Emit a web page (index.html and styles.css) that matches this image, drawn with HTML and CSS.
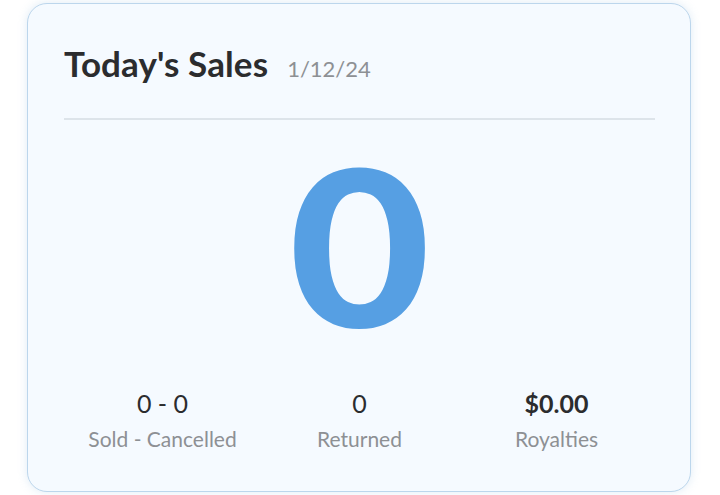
FILE: index.html
```html
<!DOCTYPE html>
<html>
<head>
<meta charset="utf-8">
<link rel="stylesheet" href="styles.css">
</head>
<body>
<div class="card">
  <div class="header">
    <h1 class="title">Today's Sales</h1>
    <span class="date">1/12/24</span>
  </div>
  <div class="divider"></div>
  <div class="big">0</div>
  <div class="stats">
    <div class="stat">
      <div class="value">0 - 0</div>
      <div class="label">Sold - Cancelled</div>
    </div>
    <div class="stat">
      <div class="value">0</div>
      <div class="label">Returned</div>
    </div>
    <div class="stat">
      <div class="value bold">$0.00</div>
      <div class="label">Royalties</div>
    </div>
  </div>
</div>
</body>
</html>
```
FILE: styles.css
```css
html, body {
  margin: 0;
  padding: 0;
  background: #ffffff;
}
body {
  font-family: Lato, "Open Sans", sans-serif;
  padding: 3px 29px 3px 27px;
  height: 495px;
  box-sizing: border-box;
}
.card {
  box-sizing: border-box;
  height: 489px;
  background: #f5faff;
  border: 1.5px solid #bcd6ec;
  border-radius: 20px;
  box-shadow: 0 0 10px rgba(150, 190, 225, 0.3);
  padding: 0 35px 0 36px;
  display: flex;
  flex-direction: column;
}
.header {
  display: flex;
  align-items: baseline;
  gap: 19px;
  padding-top: 37px;
  height: 44px;
}
.title {
  margin: 0;
  font-size: 35px;
  font-weight: 700;
  color: #2b2c2e;
  letter-spacing: 0.1px;
  line-height: 44px;
}
.date {
  font-size: 22px;
  color: #8d9094;
}
.divider {
  margin-top: 33px;
  height: 2px;
  background: #dde4ea;
}
.big {
  text-align: center;
  font-size: 218px;
  font-weight: 900;
  color: #569fe3;
  line-height: 1;
  margin-top: 14px;
  height: 230px;
  transform: scaleX(1.12);
}
.stats {
  display: grid;
  grid-template-columns: 1fr 1fr 1fr;
  margin-top: 23px;
}
.stat {
  text-align: center;
}
.value {
  font-size: 25px;
  color: #2b2c2e;
  line-height: 32px;
}
.value.bold {
  font-weight: 700;
}
.label {
  font-size: 21px;
  color: #8d9094;
  line-height: 30px;
  margin-top: 5px;
}
```
